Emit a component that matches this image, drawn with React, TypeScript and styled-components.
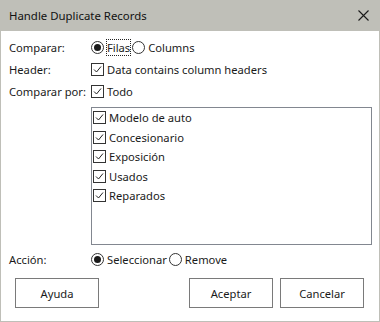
import React from 'react';
import styled, { createGlobalStyle } from 'styled-components';

const GlobalStyle = createGlobalStyle`
    html, body {
        margin: 0;
        padding: 0;
        background: #ffffff;
    }
    body {
        font-family: 'Noto Sans', 'Open Sans', sans-serif;
        font-size: 11.2px;
        color: #1a1a1a;
    }
`;

const columns = ['Modelo de auto', 'Concesionario', 'Exposición', 'Usados', 'Reparados'];

const CheckMark = () => (
    <svg width="9" height="9" viewBox="0 0 9 9">
        <path d="M1 4.5 L3.5 7 L8 1.5" fill="none" stroke="#222" strokeWidth="1" />
    </svg>
);

const Check = ({ checked }: { checked: boolean }) => <CheckBox>{checked && <CheckMark />}</CheckBox>;

const Radio = ({ checked }: { checked: boolean }) => <RadioCircle>{checked && <RadioDot />}</RadioCircle>;

export default function App() {
    return (
        <>
            <GlobalStyle />
            <Window>
                <TitleBar>
                    <Title>Handle Duplicate Records</Title>
                    <CloseButton>
                        <svg width="11" height="11" viewBox="0 0 11 11">
                            <path d="M0.5 0.5 L10.5 10.5 M10.5 0.5 L0.5 10.5" stroke="#1a1a1a" strokeWidth="1.1" />
                        </svg>
                    </CloseButton>
                </TitleBar>
                <Body>
                    <FormGrid>
                        <Label>Comparar:</Label>
                        <Options>
                            <Option>
                                <Radio checked={true} />
                                <FocusText>Filas</FocusText>
                            </Option>
                            <Option>
                                <Radio checked={false} />
                                <span>Columns</span>
                            </Option>
                        </Options>

                        <Label>Header:</Label>
                        <Options>
                            <Option>
                                <Check checked={true} />
                                <span>Data contains column headers</span>
                            </Option>
                        </Options>

                        <Label>Comparar por:</Label>
                        <Options>
                            <Option>
                                <Check checked={true} />
                                <span>Todo</span>
                            </Option>
                        </Options>

                        <span />
                        <ListBox>
                            {columns.map((c) => (
                                <ListItem key={c}>
                                    <Check checked={true} />
                                    <span>{c}</span>
                                </ListItem>
                            ))}
                        </ListBox>

                        <Label>Acción:</Label>
                        <Options>
                            <Option>
                                <Radio checked={true} />
                                <span>Seleccionar</span>
                            </Option>
                            <Option>
                                <Radio checked={false} />
                                <span>Remove</span>
                            </Option>
                        </Options>
                    </FormGrid>
                    <ButtonRow>
                        <Button>Ayuda</Button>
                        <Spacer />
                        <Button>Aceptar</Button>
                        <Button>Cancelar</Button>
                    </ButtonRow>
                </Body>
            </Window>
        </>
    );
}

const Window = styled.div`
    width: 380px;
    height: 322px;
    box-sizing: border-box;
    border: 1px solid #bfbfb8;
    border-top: none;
    display: flex;
    flex-direction: column;
    background: #ffffff;
`;

const TitleBar = styled.div`
    height: 31px;
    background: #bfbfb8;
    display: flex;
    align-items: center;
    padding: 0 9px 0 8px;
    flex-shrink: 0;
`;

const Title = styled.div`
    flex: 1;
    font-size: 11.4px;
    color: #111;
`;

const CloseButton = styled.div`
    width: 11px;
    height: 11px;
    display: flex;
    margin-right: 1px;
`;

const Body = styled.div`
    flex: 1;
    padding: 5px 7px 0 8px;
    display: flex;
    flex-direction: column;
`;

const FormGrid = styled.div`
    display: grid;
    grid-template-columns: 82px 1fr;
    grid-template-rows: 22px 22px 22px auto 22px;
`;

const Label = styled.div`
    display: flex;
    align-items: center;
    white-space: nowrap;
`;

const Options = styled.div`
    display: flex;
    align-items: center;
    gap: 2px;
    white-space: nowrap;
`;

const Option = styled.div`
    display: flex;
    align-items: center;
    gap: 3px;
`;

const FocusText = styled.span`
    outline: 1px dotted #222;
    outline-offset: 0;
    line-height: 15px;
`;

const CheckBox = styled.span`
    width: 13px;
    height: 13px;
    box-sizing: border-box;
    border: 1px solid #333;
    background: #fff;
    display: inline-flex;
    align-items: center;
    justify-content: center;
    flex-shrink: 0;
`;

const RadioCircle = styled.span`
    width: 13px;
    height: 13px;
    box-sizing: border-box;
    border: 1px solid #333;
    border-radius: 50%;
    background: #fff;
    display: inline-flex;
    align-items: center;
    justify-content: center;
    flex-shrink: 0;
`;

const RadioDot = styled.span`
    width: 7px;
    height: 7px;
    border-radius: 50%;
    background: #1a1a1a;
`;

const ListBox = styled.div`
    width: 281px;
    height: 138px;
    margin: 5px 0 3px;
    box-sizing: border-box;
    border: 1px solid #828790;
    padding: 0 0 0 1px;
    display: flex;
    flex-direction: column;
`;

const ListItem = styled.div`
    height: 19.5px;
    display: flex;
    align-items: center;
    gap: 3px;
    white-space: nowrap;
`;

const ButtonRow = styled.div`
    display: flex;
    margin-top: 8px;
    padding: 0 8px 0 6px;
    gap: 7px;
`;

const Spacer = styled.div`
    flex: 1;
`;

const Button = styled.button`
    width: 84px;
    height: 30px;
    box-sizing: border-box;
    border: 1px solid #7a7a7a;
    background: #ffffff;
    font-family: 'Noto Sans', 'Open Sans', sans-serif;
    font-size: 11.2px;
    color: #1a1a1a;
    padding: 0;
`;
